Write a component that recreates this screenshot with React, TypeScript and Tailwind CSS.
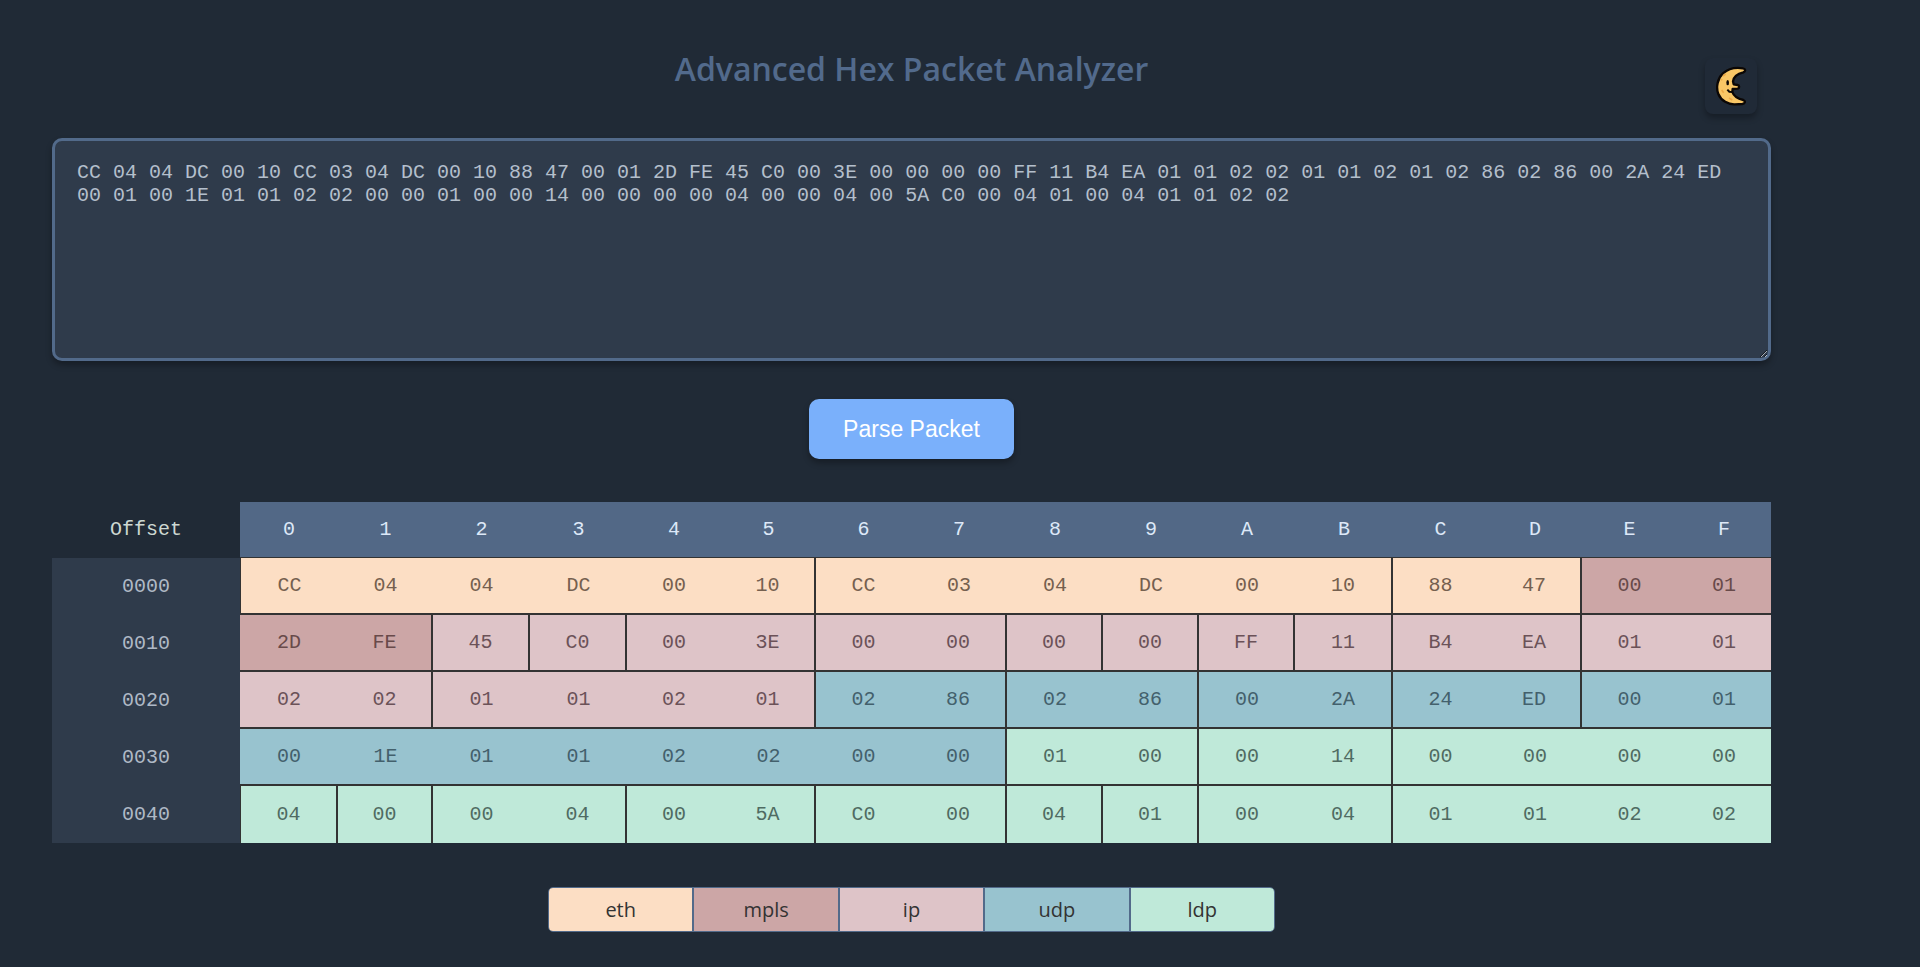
import { useState } from "react";

const PACKET =
  "CC 04 04 DC 00 10 CC 03 04 DC 00 10 88 47 00 01 2D FE 45 C0 00 3E 00 00 00 00 FF 11 B4 EA 01 01 02 02 01 01 02 01 02 86 02 86 00 2A 24 ED 00 01 00 1E 01 01 02 02 00 00 01 00 00 14 00 00 00 00 04 00 00 04 00 5A C0 00 04 01 00 04 01 01 02 02";

const COLORS = {
  eth: "bg-[#fcdec4]",
  mpls: "bg-[#cca6a6]",
  ip: "bg-[#dec4c8]",
  udp: "bg-[#98c3cf]",
  ldp: "bg-[#bfe9d9]",
};
type Proto = keyof typeof COLORS;
const PROTOS = Object.keys(COLORS) as Proto[];

const INK: Record<Proto, string> = {
  eth: "text-[#75604f]",
  mpls: "text-[#684a4a]",
  ip: "text-[#6b5258]",
  udp: "text-[#43606c]",
  ldp: "text-[#4f6b62]",
};

// Index of the first byte of each layer, in packet order.
const LAYERS: [number, Proto][] = [
  [0, "eth"],
  [14, "mpls"],
  [18, "ip"],
  [38, "udp"],
  [56, "ldp"],
];

// Bytes that close a header field before the end of their row.
const FIELD_ENDS = new Set([
  5, 11, 13, 17, 18, 19, 21, 23, 24, 25, 26, 27, 29, 33, 37, 39, 41, 43, 45, 55, 57, 59, 64, 65, 67, 69, 71, 72, 73, 75,
]);
// Rows whose first byte opens a field.
const FIELD_START_ROWS = new Set([0, 4]);

const COLS = [
  "w-[188px]", "w-[98px]", "w-[95px]", "w-[97px]", "w-[97px]", "w-[94px]", "w-[95px]", "w-[95px]", "w-[96px]",
  "w-[96px]", "w-[96px]", "w-[96px]", "w-[98px]", "w-[95px]", "w-[94px]", "w-[95px]", "w-[94px]",
];

function layerOf(index: number): Proto {
  let found: Proto = "eth";
  for (const [start, proto] of LAYERS) if (index >= start) found = proto;
  return found;
}

function Moon() {
  return (
    <svg viewBox="24 20 96 120" className="h-10 w-8" aria-hidden="true">
      <path
        d="M108 27 C90 24 66 26 48 42 C32 56 26 84 34 104 C42 124 64 136 84 135 L106 134 C115 133 116 125 109 122 C95 119 80 110 76 98 L77 89 L92 88 C98 86 98 78 92 77 L80 75 L78 66 C80 52 92 43 109 39 C117 36 116 28 108 27 Z"
        fill="#f9c766"
        stroke="#0b0705"
        strokeWidth="7"
        strokeLinejoin="round"
      />
      <path d="M48 50 L56 44 M42 62 L46 60 M44 92 L50 100 M66 116 L76 122" stroke="#eeaa48" strokeWidth="5" />
      <ellipse cx="62" cy="70" rx="4" ry="8" fill="#0b0705" />
      <path d="M61 91 L67 97 L77 98" fill="none" stroke="#0b0705" strokeWidth="6" />
    </svg>
  );
}

export default function App() {
  const [text, setText] = useState(PACKET);
  const bytes = PACKET.split(" ");
  const rows = [0, 1, 2, 3, 4].map((r) => bytes.slice(r * 16, r * 16 + 16));

  return (
    <div className="relative min-h-screen bg-[#202a36] pt-11 pr-[149px] pb-9 pl-[52px] font-['Open_Sans',sans-serif]">
      <button
        type="button"
        aria-label="Toggle dark mode"
        className="absolute top-[58px] right-[163px] flex h-14 w-[52px] items-center justify-center rounded-lg bg-[#202a37] shadow-[0_4px_6px_rgba(0,0,0,0.3)]"
      >
        <Moon />
      </button>
      <main className="flex flex-col items-center">
        <h1 className="text-[32px] leading-[50px] font-semibold text-[#526a8c]">Advanced Hex Packet Analyzer</h1>
        <textarea
          aria-label="Packet bytes"
          spellCheck={false}
          value={text}
          onChange={(e) => setText(e.target.value)}
          className="mt-11 block h-[223px] w-full resize rounded-[10px] border-3 border-[#526a8a] bg-[#2f3b4b] px-[22px] py-5 font-['Liberation_Mono',monospace] text-[20px] leading-[23px] text-[#b4bfcc] shadow-[0_4px_6px_rgba(0,0,0,0.3)] outline-none"
        />
        <button
          type="button"
          className="mt-[38px] h-[60px] rounded-[10px] bg-[#7ab0fb] px-[34px] font-['Liberation_Sans',sans-serif] text-[23px] text-white shadow-[0_4px_6px_rgba(0,0,0,0.3)]"
        >
          Parse Packet
        </button>
        <table className="mt-[43px] w-full table-fixed border-separate border-spacing-0 text-center font-['Liberation_Mono',monospace] text-[20px]">
          <colgroup>
            {COLS.map((w, i) => (
              <col key={i} className={w} />
            ))}
          </colgroup>
          <thead>
            <tr className="h-14">
              <th className="font-normal text-[#cdd8d2]">Offset</th>
              {[..."0123456789ABCDEF"].map((c) => (
                <th key={c} className="border-b border-[#333333] bg-[#526886] font-normal text-[#dde8f8]">
                  {c}
                </th>
              ))}
            </tr>
          </thead>
          <tbody>
            {rows.map((row, r) => (
              <tr key={r} className="h-[57px]">
                <th className="bg-[#2f3b4b] font-normal text-[#afb9c6]">{`00${r}0`}</th>
                {row.map((b, c) => {
                  const i = r * 16 + c;
                  const proto = layerOf(i);
                  return (
                    <td
                      key={c}
                      className={[
                        "border-[#333333]",
                        COLORS[proto],
                        INK[proto],
                        r < 4 ? "border-b-2" : "",
                        FIELD_ENDS.has(i) ? "border-r-2" : "",
                        c === 0 && FIELD_START_ROWS.has(r) ? "border-l" : "",
                      ].join(" ")}
                    >
                      {b}
                    </td>
                  );
                })}
              </tr>
            ))}
          </tbody>
        </table>
        <ul className="mt-11 flex w-[727px] overflow-hidden rounded-[5px] border border-[#526a8a] text-[20px] text-[#333333]">
          {PROTOS.map((p) => (
            <li
              key={p}
              className={`flex h-[43px] flex-1 items-center justify-center border-r-2 border-[#526a8a] last:border-r-0 ${COLORS[p]}`}
            >
              {p}
            </li>
          ))}
        </ul>
      </main>
    </div>
  );
}
